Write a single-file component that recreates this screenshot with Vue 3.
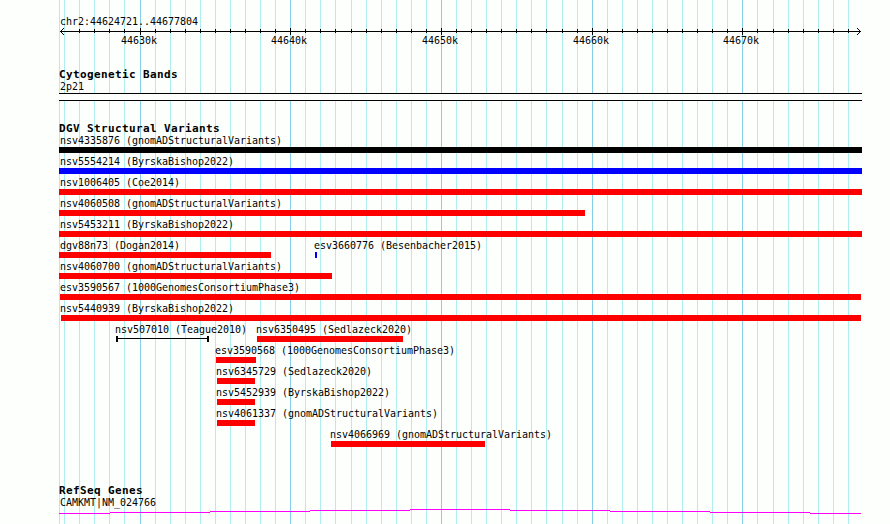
<template>
  <div class="browser">
    <svg class="gridlines" width="890" height="524" shape-rendering="crispEdges">
      <rect
        v-for="x in minor"
        :key="x"
        :x="x"
        y="0"
        width="1"
        height="524"
        fill="#afeeee"
      />
      <rect
        v-for="m in major"
        :key="m.x"
        :x="m.x"
        y="0"
        width="1"
        height="524"
        fill="#87ceeb"
      />
    </svg>
    <div class="panel">
      <div class="ruler">
        <div class="label">chr2:44624721..44677804</div>
        <svg class="axis" width="803" height="7" viewBox="59 28 803 7" shape-rendering="crispEdges">
          <rect x="60" y="31" width="801" height="1" />
          <rect v-for="x in minorTicks" :key="x" :x="x" y="29" width="1" height="4" />
          <rect v-for="m in major" :key="m.x" :x="m.x" y="28" width="1" height="7" />
          <path d="M61 30h1v1h-1zM62 29h1v1h-1zM63 28h1v1h-1zM61 32h1v1h-1zM62 33h1v1h-1zM63 34h1v1h-1z" />
          <path d="M859 30h1v1h-1zM858 29h1v1h-1zM857 28h1v1h-1zM859 32h1v1h-1zM858 33h1v1h-1zM857 34h1v1h-1z" />
        </svg>
        <div class="scale">
          <span
            v-for="m in major"
            :key="m.x"
            class="label mark"
            :style="{ left: m.x - 78 + 'px' }"
          >{{ m.text }}</span>
        </div>
      </div>
      <div class="track cyto">
        <h2>Cytogenetic Bands</h2>
        <div class="label">2p21</div>
        <div class="band"></div>
      </div>
      <div class="track variants">
        <h2>DGV Structural Variants</h2>
        <div class="row" v-for="(row, index) in rows" :key="index">
          <div
            class="feature"
            v-for="item in row"
            :key="item.name"
            :style="{ left: item.label - 59 + 'px' }"
          >
            <div class="label">{{ item.name }}</div>
            <div
              :class="['bar', item.type]"
              :style="{ marginLeft: item.start - item.label + 'px', width: item.end - item.start + 'px' }"
            ></div>
          </div>
        </div>
      </div>
      <div class="track genes">
        <h2>RefSeq Genes</h2>
        <div class="label">CAMKMT|NM_024766</div>
        <svg class="intron" width="803" height="5" viewBox="59 509 803 5" shape-rendering="crispEdges">
          <rect
            v-for="s in intron"
            :key="s[0]"
            :x="s[0]"
            :y="s[2]"
            :width="s[1] - s[0]"
            height="1"
            fill="#ff00ff"
          />
        </svg>
      </div>
    </div>
  </div>
</template>
<script setup>
const major = [
  { x: 140, text: "44630k" },
  { x: 290, text: "44640k" },
  { x: 441, text: "44650k" },
  { x: 592, text: "44660k" },
  { x: 742, text: "44670k" },
];
const minorTicks = [
  79, 94, 109, 124, 155, 170, 185, 200, 215, 230, 245, 260, 275, 305, 320, 335,
  351, 366, 381, 396, 411, 426, 456, 471, 486, 501, 516, 531, 546, 562, 577,
  607, 622, 637, 652, 667, 682, 697, 712, 727, 757, 773, 788, 803, 818, 833, 848,
];
const minor = [59, 64, ...minorTicks];

const feature = (name, type, start, end, label) => ({ name, type, start, end, label });
const rows = [
  [feature("nsv4335876 (gnomADStructuralVariants)", "black", 59, 862, 60)],
  [feature("nsv5554214 (ByrskaBishop2022)", "blue", 59, 862, 60)],
  [feature("nsv1006405 (Coe2014)", "red", 59, 862, 60)],
  [feature("nsv4060508 (gnomADStructuralVariants)", "red", 59, 585, 60)],
  [feature("nsv5453211 (ByrskaBishop2022)", "red", 59, 862, 60)],
  [
    feature("dgv88n73 (Dogan2014)", "red", 59, 271, 60),
    feature("esv3660776 (Besenbacher2015)", "blue", 315, 317, 314),
  ],
  [feature("nsv4060700 (gnomADStructuralVariants)", "red", 59, 332, 60)],
  [feature("esv3590567 (1000GenomesConsortiumPhase3)", "red", 60, 861, 60)],
  [feature("nsv5440939 (ByrskaBishop2022)", "red", 61, 861, 60)],
  [
    feature("nsv507010 (Teague2010)", "span", 116, 209, 115),
    feature("nsv6350495 (Sedlazeck2020)", "red", 257, 403, 256),
  ],
  [feature("esv3590568 (1000GenomesConsortiumPhase3)", "red", 216, 256, 215)],
  [feature("nsv6345729 (Sedlazeck2020)", "red", 217, 255, 216)],
  [feature("nsv5452939 (ByrskaBishop2022)", "red", 217, 255, 216)],
  [feature("nsv4061337 (gnomADStructuralVariants)", "red", 217, 255, 216)],
  [feature("nsv4066969 (gnomADStructuralVariants)", "red", 331, 485, 330)],
];

// start, end, y of every step in the intron arc
const intron = [
  [59, 110, 513],
  [110, 210, 512],
  [210, 310, 511],
  [310, 410, 510],
  [410, 510, 509],
  [510, 610, 510],
  [610, 710, 511],
  [710, 810, 512],
  [810, 861, 513],
];
</script>
<style>
body {
  background: #fdfffc;
}
</style>
<style scoped>
.browser {
  position: relative;
  width: 890px;
  height: 524px;
  overflow: hidden;
  background: #fdfffc;
  color: #000;
  font-family: "DejaVu Sans Mono", monospace;
}
.gridlines {
  position: absolute;
  left: 0;
  top: 0;
}
.panel {
  position: relative;
  width: 803px;
  margin-left: 59px;
  padding-top: 15px;
}
.label {
  height: 12px;
  margin-left: 1px;
  font-size: 10px;
  line-height: 12px;
  letter-spacing: -0.02px;
  white-space: pre;
  transform: scaleY(1.1);
  transform-origin: 0 0;
}
h2 {
  height: 12px;
  margin: 0;
  font-size: 11px;
  line-height: 14px;
  font-weight: bold;
  letter-spacing: 0.378px;
  white-space: pre;
}
.ruler {
  height: 53px;
}
.axis {
  display: block;
  margin-top: 1px;
}
.scale {
  position: relative;
  height: 12px;
}
.mark {
  position: absolute;
  top: -1px;
  margin-left: 0;
}
.cyto {
  height: 54px;
}
.band {
  box-sizing: border-box;
  height: 8px;
  margin-top: 1px;
  border-top: 1px solid #000;
  border-bottom: 1px solid #000;
  background: #fdfffc;
}
.variants {
  height: 362px;
}
.row {
  position: relative;
  height: 21px;
}
.feature {
  position: absolute;
  top: 0;
}
.feature .label {
  margin-left: 0;
}
.bar {
  height: 6px;
  margin-top: 1px;
}
.black {
  background: #000;
}
.blue {
  background: #00f;
}
.red {
  background: #f00;
}
.span {
  box-sizing: border-box;
  border: solid #000;
  border-width: 0 2px;
  background: linear-gradient(#000, #000) 0 2px / 100% 1px no-repeat;
}
.intron {
  display: block;
  margin-top: 1px;
}
</style>
